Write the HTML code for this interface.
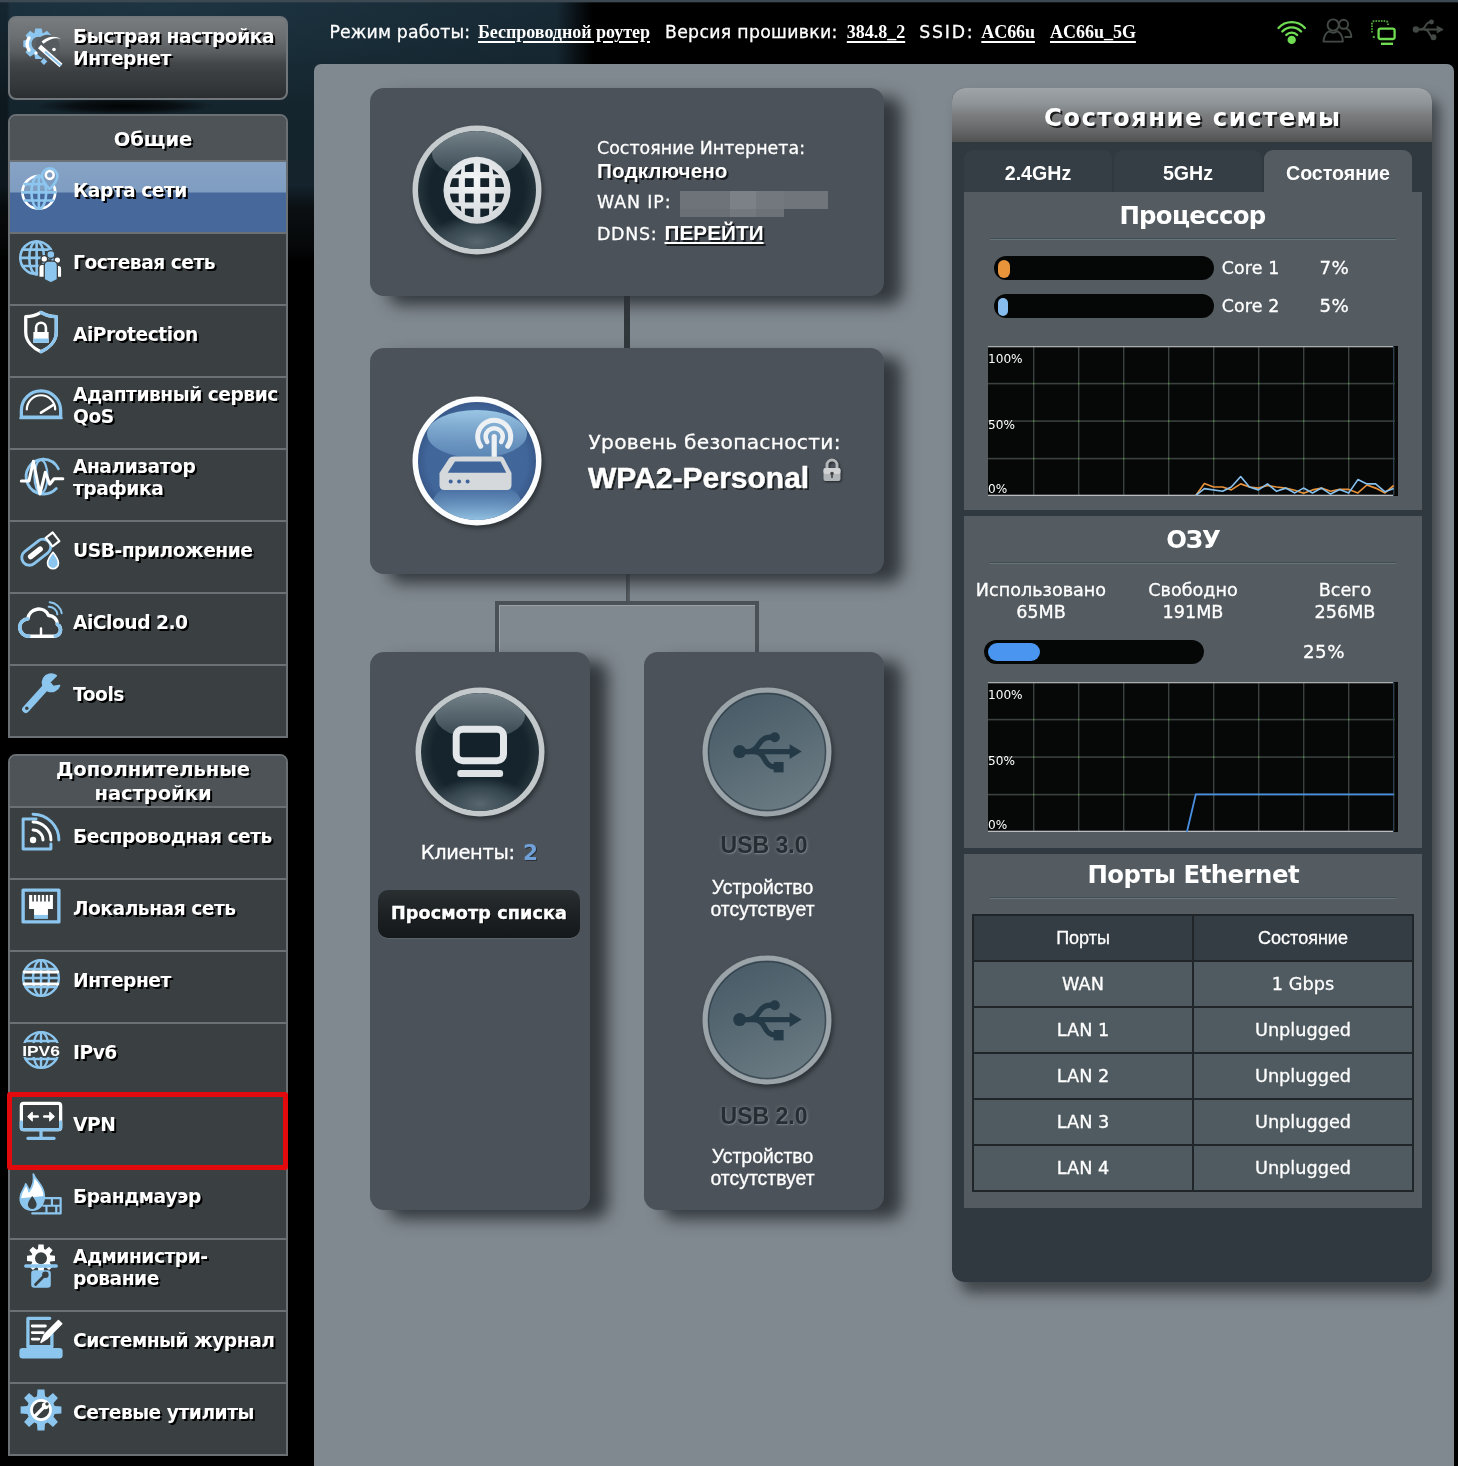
<!DOCTYPE html>
<html lang="ru">
<head>
<meta charset="utf-8">
<title>ASUS Wireless Router RT-AC66U - Карта сети</title>
<style>
html,body{margin:0;padding:0;}
body{width:1458px;height:1466px;overflow:hidden;position:relative;background:#000;color:#fff;
 font-family:"DejaVu Sans","Liberation Sans",sans-serif;font-size:17.3px;}
#bg{position:absolute;left:0;top:0;width:1458px;height:1466px;
 background:
  linear-gradient(to bottom,#3d4952 0,#3d4952 1.5px,rgba(61,73,82,0) 3px),
  linear-gradient(to right,rgba(0,0,0,0) 0,rgba(0,0,0,0) 556px,#000 592px),
  radial-gradient(ellipse 90px 9px at 125px 106px,rgba(0,0,0,.9) 0%,rgba(0,0,0,.6) 55%,rgba(0,0,0,0) 100%),
  radial-gradient(ellipse 420px 110px at 160px 0px,rgba(40,70,88,.4) 0%,rgba(40,70,88,0) 100%),
  linear-gradient(to right,rgba(0,0,0,.35) 0,rgba(0,0,0,.35) 7px,rgba(0,0,0,0) 10px),
  linear-gradient(to bottom,#172934 0,#15262f 70px,#14232c 186px,#0b1013 207px,#060809 245px,#000 262px),#000;}
#wrap{position:absolute;left:0;top:0;width:1458px;height:1466px;will-change:transform;transform:translateZ(0);-webkit-text-stroke:0.3px currentColor;}
.b,b,.mtxt,.tab,#topbar a{-webkit-text-stroke:0;}
#viewbtn span{-webkit-text-stroke:0.4px #fff;}
.abs{position:absolute;white-space:nowrap;}
.b{font-weight:bold;}
.nm{font-family:"DejaVu Sans",sans-serif;}
.ar{font-family:"Liberation Sans",sans-serif;}
.t17{font-family:"DejaVu Sans",sans-serif;font-size:17.4px;line-height:24px;}
.sh{text-shadow:2px 2px 0 #15191c;}
/* top bar */
#topbar{position:absolute;left:329px;top:20px;height:24px;line-height:24px;white-space:nowrap;font-size:17.3px;}
#topbar a{font-family:"Liberation Serif",serif;font-weight:bold;font-size:18px;color:#fff;text-decoration:underline;}
/* menu */
#qis{position:absolute;left:8px;top:16px;width:276px;height:80px;border:2px solid #70767a;border-radius:8px;
 background:linear-gradient(to bottom,#787c7f 0%,#6a6e71 25%,#5a5e61 42%,#44484b 56%,#3b3f42 68%,#34383a 84%,#2a2e30 100%);}
#qis svg{position:absolute;left:12px;top:8px;width:44px;height:44px;overflow:visible;}
.mtxt{font-weight:bold;font-size:18.7px;line-height:22px;letter-spacing:-0.5px;color:#fff;text-shadow:2px 2px 0 #000;white-space:nowrap;}
#qis .mtxt{position:absolute;left:63px;top:8px;}
.msec{position:absolute;left:8px;width:276px;border:2px solid #6a7073;border-radius:8px 8px 0 0;background:#3a4042;overflow:hidden;}
.mhead{background:#4d5356;text-align:center;}
.mtxt.hd{font-size:19.6px;letter-spacing:-0.1px;padding-left:10px;}
.mitem{position:relative;height:70px;border-top:2px solid #6a7073;background:#3a4042;}
.mitem .mtxt{position:absolute;left:63px;top:18px;}
.mitem.two .mtxt{top:6px;}
.mitem svg{position:absolute;left:7px;top:2px;width:48px;height:48px;}
.mitem.sel{background:linear-gradient(to bottom,#86a3c5 0,#7f9dc1 30px,#47689b 31px,#47689b 100%);}
#redbox{position:absolute;left:7px;top:1092px;width:271px;height:68px;border:5px solid #e20a0d;border-radius:3px;}
/* main */
#main{position:absolute;left:314px;top:64px;width:1140px;height:1420px;background:#818990;border-radius:7px;}
.card{position:absolute;background:#4b5259;border-radius:14px;box-shadow:18px 9px 16px rgba(42,48,52,.9);}
.ln{position:absolute;background:#4a5157;box-shadow:1px 0 0 #6c747a;}
.lnbox{position:absolute;border:4px solid #4a5157;border-bottom:none;box-sizing:border-box;box-shadow:inset 1px 1px 0 #9aa2a7;}
#blur i{position:absolute;display:block;}
#viewbtn{border-radius:10px;background:linear-gradient(to bottom,#2a2f32 0%,#1d2124 50%,#14181a 100%);text-align:center;box-shadow:0 1px 0 #5c646a;}
#viewbtn span{font-family:"DejaVu Sans",sans-serif;font-weight:bold;font-size:17.6px;line-height:46px;letter-spacing:-0.3px;text-shadow:1px 1px 0 #000;}
/* status panel */
#sp{position:absolute;left:952px;top:88px;width:480px;height:1194px;border-radius:13px;background:#30393f;box-shadow:8px 11px 13px rgba(48,52,55,.78);overflow:hidden;}
#sphead{height:54px;background:linear-gradient(to bottom,#9ea4a8 0%,#8d9397 30%,#7b7d7e 50%,#686a6b 75%,#505252 100%);text-align:center;}
#sphead span{font-family:"DejaVu Sans",sans-serif;font-weight:bold;font-size:23px;letter-spacing:2px;line-height:58px;text-shadow:2px 2px 0 #222;}
.tab{position:absolute;top:150px;height:42px;line-height:46px;text-align:center;font-family:"Liberation Sans",sans-serif;font-weight:bold;font-size:19.6px;background:#343e44;border-radius:9px 9px 0 0;}
.tab.act{background:#545c62;}
.sbox{position:absolute;left:964px;width:458px;background:#545c62;}
.stitle{position:absolute;left:964px;width:457px;text-align:center;font-family:"DejaVu Sans",sans-serif;font-weight:bold;font-size:23.4px;line-height:32px;}
.sdiv{position:absolute;left:990px;width:406px;height:1px;background:#414c53;box-shadow:0 1px 0 #66747b;}
.bar{position:absolute;background:#050707;border-radius:12px;}
.bar i{position:absolute;display:block;border-radius:9px;}
#ptab{position:absolute;left:972px;top:914px;width:442px;height:278px;background:#1f2528;}
.pr{position:absolute;left:0;width:442px;height:46px;}
.pr div{position:absolute;top:2px;height:44px;line-height:44px;text-align:center;background:#4f5b61;font-family:"DejaVu Sans",sans-serif;font-size:17.7px;}
.pr.hd div{background:#343d44;font-family:"Liberation Sans",sans-serif;font-size:18px;height:44px;line-height:45px;}
.pr div:first-child{left:2px;width:218px;}
.pr div:last-child{left:222px;width:218px;}
.pr:nth-child(1){top:0px;}.pr:nth-child(2){top:46px;}.pr:nth-child(3){top:92px;}.pr:nth-child(4){top:138px;}.pr:nth-child(5){top:184px;}.pr:nth-child(6){top:230px;}
</style>
</head>
<body>
<div id="bg"></div>
<div id="wrap">
<div class="abs" style="left:329.5px;top:20px;font-family:'DejaVu Sans',sans-serif;font-weight:normal;font-size:17.3px;line-height:24px;letter-spacing:0.157px;">Режим работы:</div>
<div class="abs" style="left:478px;top:20px;font-family:'Liberation Serif',sans-serif;font-weight:bold;font-size:18px;line-height:24px;letter-spacing:-0.036px;-webkit-text-stroke:0;text-decoration:underline;text-decoration-thickness:1.9px;text-underline-offset:2.6px;">Беспроводной роутер</div>
<div class="abs" style="left:665px;top:20px;font-family:'DejaVu Sans',sans-serif;font-weight:normal;font-size:17.3px;line-height:24px;letter-spacing:0.317px;">Версия прошивки:</div>
<div class="abs" style="left:846.8px;top:20px;font-family:'Liberation Serif',sans-serif;font-weight:bold;font-size:18px;line-height:24px;letter-spacing:-0.017px;-webkit-text-stroke:0;text-decoration:underline;text-decoration-thickness:1.9px;text-underline-offset:2.6px;">384.8_2</div>
<div class="abs" style="left:919.2px;top:20px;font-family:'DejaVu Sans',sans-serif;font-weight:normal;font-size:17.3px;line-height:24px;letter-spacing:1.807px;">SSID:</div>
<div class="abs" style="left:981.3px;top:20px;font-family:'Liberation Serif',sans-serif;font-weight:bold;font-size:18px;line-height:24px;letter-spacing:-0.079px;-webkit-text-stroke:0;text-decoration:underline;text-decoration-thickness:1.9px;text-underline-offset:2.6px;">AC66u</div>
<div class="abs" style="left:1050px;top:20px;font-family:'Liberation Serif',sans-serif;font-weight:bold;font-size:18px;line-height:24px;letter-spacing:-0.017px;-webkit-text-stroke:0;text-decoration:underline;text-decoration-thickness:1.9px;text-underline-offset:2.6px;">AC66u_5G</div>
<svg class="abs" style="left:1270px;top:10px" width="184" height="44" viewBox="0 0 184 44" fill="none" stroke-linecap="round" stroke-linejoin="round">
<g stroke="#6fdc52" stroke-width="2.3"><path d="M8.5,18 A17.8,17.8 0 0 1 34.9,18"/><path d="M12.3,21.5 A12.6,12.6 0 0 1 31.1,21.5"/><path d="M16.2,25 A7.4,7.4 0 0 1 27.2,25"/></g><circle cx="21.7" cy="29.9" r="4.2" fill="#6fdc52"/>
<g stroke="#434945" stroke-width="1.9"><circle cx="73.6" cy="14.3" r="4.5"/><path d="M76.5,18.6c3.2,1.2 4.6,4 4.8,8.4h-6"/><circle cx="63.2" cy="15" r="5.6" fill="#000"/><path d="M53.6,31.6c0.2,-6 2.4,-9 5.8,-10.4c2.2,1.8 5.4,1.8 7.6,0c3.4,1.4 5.6,4.4 5.8,10.4z" fill="#000"/></g>
<g stroke="#4a9a38" stroke-width="2" stroke-dasharray="1.6 1.1" stroke-linecap="butt"><path d="M102,22.5v-9a2.4,2.4 0 0 1 2.4,-2.4h11.2a2.4,2.4 0 0 1 2.4,2.4v1.5"/></g><circle cx="103.8" cy="27" r="1.2" fill="#4a9a38"/>
<rect x="108.6" y="18.6" width="16" height="10.4" rx="2" stroke="#6fdc52" stroke-width="2.3"/><path d="M111,33.8h12" stroke="#6fdc52" stroke-width="2.4" stroke-linecap="butt"/>
<g stroke="#434945" fill="#434945" stroke-width="1.9"><circle cx="145.9" cy="19.5" r="2.2"/><path d="M146,19.5h22" fill="none"/><path d="M167.5,16.4l5.6,3.1l-5.6,3.1z" stroke-width="1"/><path d="M150,19.5q3.5,0 5.5,-3.7q2,-3.8 5.5,-3.8" fill="none"/><circle cx="161.5" cy="12" r="1.5"/><path d="M154.5,19.5q3,0 4.6,3.6q1.8,4 4.4,4.2" fill="none"/><circle cx="163.5" cy="27.3" r="2"/></g>
</svg>
<div id="qis"><svg viewBox="0 0 44 44" fill="none" stroke="#8cc6ee" stroke-width="2.4" stroke-linecap="round" stroke-linejoin="round" ><path d="M27.3,13.7 L31.7,14.6 L31.7,21.0 L27.3,21.9 L27.0,22.5 L29.5,26.2 L24.9,30.8 L21.2,28.3 L20.6,28.6 L19.7,33.0 L13.3,33.0 L12.4,28.6 L11.8,28.3 L8.1,30.8 L3.5,26.2 L6.0,22.5 L5.7,21.9 L1.3,21.0 L1.3,14.6 L5.7,13.7 L6.0,13.1 L3.5,9.4 L8.1,4.8 L11.8,7.3 L12.4,7.0 L13.3,2.6 L19.7,2.6 L20.6,7.0 L21.2,7.3 L24.9,4.8 L29.5,9.4 L27.0,13.1Z" fill="#8cc6ee" stroke="none"/><path d="M7,12 a11,11 0 0 0 0,12" stroke="#ffffff" stroke-width="3.4" fill="none"/><circle cx="16.5" cy="17.8" r="7" fill="#5d6266" stroke="none"/><circle cx="25.5" cy="21" r="12.2" fill="#565b5f" stroke="none"/><path d="M19.5,15.5 Q28,8 39,12.5 Q29,10.8 21.5,17.8z" fill="#ffffff" stroke="none"/><path d="M17.5,20.5 L39,39.5" stroke="#ffffff" stroke-width="4.6" stroke-linecap="butt"/><path d="M23,25.5 L39,39.5" stroke="#8cc6ee" stroke-width="2" stroke-linecap="butt"/><circle cx="32" cy="23.5" r="1.8" fill="#ffffff" stroke="none"/><path d="M18.5,35.5l3.4,-3.4l3.4,3.4l-3.4,3.4z" fill="#8cc6ee" stroke="none"/><path d="M12,27l2,-2l2,2l-2,2z" fill="#ffffff" stroke="none"/></svg><div class="mtxt">Быстрая настройка<br>Интернет</div></div>
<div class="msec" style="top:114px"><div class="mhead" style="height:44px"><div class="mtxt hd" style="padding-top:13px">Общие</div></div>
<div class="mitem sel"><svg viewBox="0 0 44 44" fill="none" stroke="#8cc6ee" stroke-width="2.4" stroke-linecap="round" stroke-linejoin="round" ><circle stroke="#fff" cx="20" cy="26" r="15"/><ellipse cx="20" cy="26" rx="6.8" ry="15"/><path d="M5,26H35M20,11V41M7.1,18.5H32.9M7.1,33.5H32.9"/><path d="M30,4a7,7 0 0 1 7,7c0,5 -7,12 -7,12s-7,-7 -7,-12a7,7 0 0 1 7,-7z" fill="#7f9dc1" stroke="#8cc6ee"/><circle cx="30" cy="10" r="3.6" stroke="#ffffff"/></svg><div class="mtxt">Карта сети</div></div>
<div class="mitem "><svg viewBox="0 0 44 44" fill="none" stroke="#8cc6ee" stroke-width="2.4" stroke-linecap="round" stroke-linejoin="round" ><circle cx="18" cy="20" r="15"/><ellipse cx="18" cy="20" rx="6.8" ry="15"/><path d="M3,20H33M18,5V35M5.1,12.5H30.9M5.1,27.5H30.9"/><g fill="#ffffff" stroke="#3a4042" stroke-width="1.2"><circle cx="25" cy="21" r="3"/><path d="M20,38v-9a3,3 0 0 1 3,-3h4a3,3 0 0 1 3,3v9z"/><circle cx="37" cy="22" r="3"/><path d="M33,38v-8a3,3 0 0 1 3,-3h2a3,3 0 0 1 3,3v8z"/><circle cx="31" cy="17" r="3.6" fill="#8cc6ee"/><path d="M25,40v-13a4,4 0 0 1 4,-4h4a4,4 0 0 1 4,4v13l-6,3z" fill="#8cc6ee"/></g></svg><div class="mtxt">Гостевая сеть</div></div>
<div class="mitem "><svg viewBox="0 0 44 44" fill="none" stroke="#8cc6ee" stroke-width="2.4" stroke-linecap="round" stroke-linejoin="round" ><path d="M22,4c5,3 10,4 14,4v14c0,9 -7,15 -14,18c-7,-3 -14,-9 -14,-18v-14c4,0 9,-1 14,-4z" stroke="#ffffff" stroke-width="3"/><path d="M22,4c5,3 10,4 14,4v14c0,9 -7,15 -14,18" stroke="#8cc6ee" stroke-width="3"/><rect x="15" y="22" width="14" height="10" fill="#ffffff" stroke="none"/><path d="M17.5,22v-4a4.5,4.5 0 0 1 9,0v4" stroke="#ffffff"/><rect x="15" y="28" width="14" height="4" fill="#8cc6ee" stroke="none"/></svg><div class="mtxt">AiProtection</div></div>
<div class="mitem two"><svg viewBox="0 0 44 44" fill="none" stroke="#8cc6ee" stroke-width="2.4" stroke-linecap="round" stroke-linejoin="round" ><path d="M4,34v-6a18,18 0 0 1 36,0v6z" stroke="#8cc6ee" stroke-width="3"/><path d="M9,27a13,13 0 0 1 26,0" stroke="#ffffff" stroke-width="2"/><path d="M22,30l11,-7" stroke="#ffffff" stroke-width="2.4"/><path d="M3,35h38" stroke="#8cc6ee" stroke-width="2"/></svg><div class="mtxt">Адаптивный сервис<br>QoS</div></div>
<div class="mitem two"><svg viewBox="0 0 44 44" fill="none" stroke="#8cc6ee" stroke-width="2.4" stroke-linecap="round" stroke-linejoin="round" ><g transform="translate(2 0.5)"><path d="M22,6a16,16 0 1 0 12,27" stroke="#8cc6ee" stroke-width="2.6"/><path d="M22,6a16,16 0 0 1 14,9" stroke="#8cc6ee"/><ellipse cx="20" cy="22" rx="6" ry="15" stroke="#8cc6ee" stroke-width="2"/><path d="M2,26h7l4,-18l6,30l5,-20l4,11l4,-5h8" stroke="#ffffff" stroke-width="2.8"/></g></svg><div class="mtxt">Анализатор<br>трафика</div></div>
<div class="mitem "><svg viewBox="0 0 44 44" fill="none" stroke="#8cc6ee" stroke-width="2.4" stroke-linecap="round" stroke-linejoin="round" ><g transform="rotate(-38 20 24)"><rect x="2" y="17" width="30" height="14" rx="7" stroke="#8cc6ee" stroke-width="2.6"/><rect x="8" y="21.5" width="16" height="5" rx="2.5" fill="#ffffff" stroke="none"/><rect x="32" y="19" width="8" height="10" stroke="#ffffff" stroke-width="2"/></g><path d="M33,26c4,5 5,8 5,10a5,5 0 0 1 -10,0c0,-2 1,-5 5,-10z" fill="#8cc6ee" stroke="#ffffff" stroke-width="1.5"/></svg><div class="mtxt">USB-приложение</div></div>
<div class="mitem "><svg viewBox="0 0 44 44" fill="none" stroke="#8cc6ee" stroke-width="2.4" stroke-linecap="round" stroke-linejoin="round" ><g transform="translate(0 2.8)"><path d="M11,34a8,8 0 0 1 -1,-16a10,10 0 0 1 19,-3a8,8 0 0 1 8,8a6,6 0 0 1 -2,11z" stroke="#ffffff" stroke-width="3.2"/><path d="M11,34a8,8 0 0 1 -1,-16" stroke="#8cc6ee" stroke-width="3.2"/><path d="M35,34a6,6 0 0 0 2,-11" stroke="#8cc6ee" stroke-width="3.2"/><path d="M29,7a8,8 0 0 1 8,7M30,3a12,12 0 0 1 11,10" stroke="#8cc6ee" stroke-width="1.8"/><path d="M15,34h14M22,27v6" stroke="#ffffff" stroke-width="2.2"/></g></svg><div class="mtxt">AiCloud 2.0</div></div>
<div class="mitem "><svg viewBox="0 0 44 44" fill="none" stroke="#8cc6ee" stroke-width="2.4" stroke-linecap="round" stroke-linejoin="round" ><path d="M8,38L26,18" stroke="#8cc6ee" stroke-width="6.5"/><path d="M36,7a8,8 0 1 0 3,9l-6,1l-3,-4z" fill="#8cc6ee" stroke="#8cc6ee" stroke-width="1.5"/><circle cx="9" cy="37" r="1.6" fill="#3a4042" stroke="none"/></svg><div class="mtxt">Tools</div></div>
</div>
<div class="msec" style="top:754px"><div class="mhead" style="height:50px"><div class="mtxt hd" style="padding-top:2px;line-height:24px">Дополнительные<br>настройки</div></div>
<div class="mitem "><svg viewBox="0 0 44 44" fill="none" stroke="#8cc6ee" stroke-width="2.4" stroke-linecap="round" stroke-linejoin="round" ><g transform="translate(22 22) scale(0.91) translate(-22 -22)"><path d="M17,7h-13v30h28v-5" stroke="#8cc6ee" stroke-width="3"/><circle cx="14" cy="28" r="3.2" fill="#ffffff" stroke="none"/><path d="M14,18a10,10 0 0 1 10,10" stroke="#ffffff" stroke-width="3"/><path d="M14,10a18,18 0 0 1 18,18" stroke="#ffffff" stroke-width="3"/><path d="M14,2a26,26 0 0 1 26,26" stroke="#8cc6ee" stroke-width="3"/></g></svg><div class="mtxt">Беспроводная сеть</div></div>
<div class="mitem "><svg viewBox="0 0 44 44" fill="none" stroke="#8cc6ee" stroke-width="2.4" stroke-linecap="round" stroke-linejoin="round" ><g transform="translate(22 22) scale(0.91) translate(-22 -22)"><rect x="4" y="6" width="36" height="32" stroke="#8cc6ee" stroke-width="3.4"/><path d="M10,11h24v14h-5v6h-14v-6h-5z" fill="#ffffff" stroke="none"/><path d="M14,11v6M18,11v6M22,11v6M26,11v6M30,11v6" stroke="#3a4042" stroke-width="1.6"/><rect x="15" y="31" width="14" height="4" fill="#8cc6ee" stroke="none"/></g></svg><div class="mtxt">Локальная сеть</div></div>
<div class="mitem "><svg viewBox="0 0 44 44" fill="none" stroke="#8cc6ee" stroke-width="2.4" stroke-linecap="round" stroke-linejoin="round" ><g transform="translate(22 22) scale(0.91) translate(-22 -22)"><circle cx="22" cy="22" r="18"/><ellipse cx="22" cy="22" rx="8.1" ry="18"/><path d="M4,22H40M22,4V40M6.5,13.0H37.5M6.5,31.0H37.5"/><path d="M5,16h34M5,28h34" stroke="#ffffff" stroke-width="3"/></g></svg><div class="mtxt">Интернет</div></div>
<div class="mitem "><svg viewBox="0 0 44 44" fill="none" stroke="#8cc6ee" stroke-width="2.4" stroke-linecap="round" stroke-linejoin="round" ><g transform="translate(22 22) scale(0.91) translate(-22 -22)"><circle cx="22" cy="22" r="18"/><ellipse cx="22" cy="22" rx="8.1" ry="18"/><path d="M4,22H40M22,4V40M6.5,13.0H37.5M6.5,31.0H37.5"/><rect x="2" y="15" width="40" height="14" fill="#3a4042" stroke="none"/><text x="22" y="28" text-anchor="middle" font-family="Liberation Sans, sans-serif" font-weight="bold" font-size="15" fill="#ffffff" stroke="none" textLength="38" lengthAdjust="spacingAndGlyphs">IPV6</text></g></svg><div class="mtxt">IPv6</div></div>
<div class="mitem "><svg viewBox="0 0 44 44" fill="none" stroke="#8cc6ee" stroke-width="2.4" stroke-linecap="round" stroke-linejoin="round" ><rect x="4" y="5" width="36" height="24" rx="2" stroke="#ffffff" stroke-width="3"/><path d="M4,22v5a2,2 0 0 0 2,2h32a2,2 0 0 0 2,-2v-5" stroke="#8cc6ee" stroke-width="3"/><path d="M11,17h8M25,17h8" stroke="#ffffff" stroke-width="2.4"/><path d="M14,13l-4,4l4,4z M30,13l4,4l-4,4z" fill="#ffffff" stroke="#ffffff" stroke-width="1"/><path d="M22,30v6M10,37h24" stroke="#8cc6ee" stroke-width="3"/></svg><div class="mtxt">VPN</div></div>
<div class="mitem "><svg viewBox="0 0 44 44" fill="none" stroke="#8cc6ee" stroke-width="2.4" stroke-linecap="round" stroke-linejoin="round" ><g transform="translate(0 1.8)"><path d="M15,2c2,6 10,10 10,20c0,8 -5,13 -11,13c-7,0 -11,-5 -11,-11c0,-6 4,-8 5,-13c2,3 3,5 3,7c3,-4 5,-9 4,-16z" fill="#ffffff" stroke="#8cc6ee" stroke-width="1.6"/><path d="M3,24c0,6 4,11 11,11c6,0 11,-5 11,-13z" fill="#8cc6ee" stroke="none"/><path d="M14,22c3,4 4,6 4,8a4,4 0 0 1 -8,0c0,-2 1,-4 4,-8z" fill="#3a4042" stroke="none"/><path d="M24,24h16v14h-26M24,31h16M32,24v7M27,31v7M36,31v7" stroke="#8cc6ee" stroke-width="2"/></g></svg><div class="mtxt">Брандмауэр</div></div>
<div class="mitem two"><svg viewBox="0 0 44 44" fill="none" stroke="#8cc6ee" stroke-width="2.4" stroke-linecap="round" stroke-linejoin="round" ><path d="M30.6,12.2 L34.8,12.6 L34.8,17.4 L30.6,17.8 L30.0,19.1 L32.7,22.4 L29.4,25.7 L26.1,23.0 L24.8,23.6 L24.4,27.8 L19.6,27.8 L19.2,23.6 L17.9,23.0 L14.6,25.7 L11.3,22.4 L14.0,19.1 L13.4,17.8 L9.2,17.4 L9.2,12.6 L13.4,12.2 L14.0,10.9 L11.3,7.6 L14.6,4.3 L17.9,7.0 L19.2,6.4 L19.6,2.2 L24.4,2.2 L24.8,6.4 L26.1,7.0 L29.4,4.3 L32.7,7.6 L30.0,10.9Z" fill="#ffffff" stroke="none"/><circle cx="22" cy="15" r="5.5" fill="#3a4042" stroke="none"/><path d="M8,22h28" stroke="#8cc6ee" stroke-width="3"/><rect x="13" y="26" width="18" height="16" rx="3" fill="#8cc6ee" stroke="none"/><path d="M17,39l8,-8" stroke="#3a4042" stroke-width="2.6"/><circle cx="26" cy="30" r="3" fill="#3a4042" stroke="none"/></svg><div class="mtxt">Администри-<br>рование</div></div>
<div class="mitem "><svg viewBox="0 0 44 44" fill="none" stroke="#8cc6ee" stroke-width="2.4" stroke-linecap="round" stroke-linejoin="round" ><path d="M10,4h20M10,4v26h22v-12" stroke="#8cc6ee" stroke-width="3"/><path d="M14,11h12M14,17h10M14,23h6" stroke="#ffffff" stroke-width="2.6"/><path d="M22,26l3,-7l13,-13l3,3l-13,13z" fill="#ffffff" stroke="#ffffff" stroke-width="1.4"/><rect x="3" y="32" width="38" height="8" rx="2" fill="#8cc6ee" stroke="#8cc6ee" stroke-width="1.6"/></svg><div class="mtxt">Системный журнал</div></div>
<div class="mitem "><svg viewBox="0 0 44 44" fill="none" stroke="#8cc6ee" stroke-width="2.4" stroke-linecap="round" stroke-linejoin="round" ><path d="M34.5,18.3 L40.7,18.8 L40.7,25.2 L34.5,25.7 L33.4,28.2 L37.5,33.0 L33.0,37.5 L28.2,33.4 L25.7,34.5 L25.2,40.7 L18.8,40.7 L18.3,34.5 L15.8,33.4 L11.0,37.5 L6.5,33.0 L10.6,28.2 L9.5,25.7 L3.3,25.2 L3.3,18.8 L9.5,18.3 L10.6,15.8 L6.5,11.0 L11.0,6.5 L15.8,10.6 L18.3,9.5 L18.8,3.3 L25.2,3.3 L25.7,9.5 L28.2,10.6 L33.0,6.5 L37.5,11.0 L33.4,15.8Z" fill="#8cc6ee" stroke="none"/><circle cx="22" cy="22" r="10" fill="#ffffff" stroke="none"/><circle cx="22" cy="22" r="7.5" fill="#3a4042" stroke="none"/><path d="M16,28l8,-8" stroke="#ffffff" stroke-width="3"/><circle cx="26" cy="18" r="3.2" fill="#ffffff" stroke="none"/><circle cx="27.5" cy="16.5" r="1.6" fill="#3a4042" stroke="none"/></svg><div class="mtxt">Сетевые утилиты</div></div>
</div>
<div id="redbox"></div>
<div id="main"></div>
<svg width="0" height="0" style="position:absolute"><defs>
<radialGradient id="gdark" cx="50%" cy="50%" r="50%"><stop offset="0" stop-color="#15242c"/><stop offset="0.8" stop-color="#16252d"/><stop offset="1" stop-color="#26343c"/></radialGradient>
<radialGradient id="gblue" cx="50%" cy="50%" r="50%"><stop offset="0" stop-color="#44699d"/><stop offset="0.85" stop-color="#41669a"/><stop offset="1" stop-color="#39598a"/></radialGradient>
<linearGradient id="gusb" x1="0.2" y1="0" x2="0.7" y2="1"><stop offset="0" stop-color="#485b66"/><stop offset="0.5" stop-color="#586a74"/><stop offset="1" stop-color="#6b7b83"/></linearGradient>
<radialGradient id="gwhite" cx="45%" cy="35%" r="75%"><stop offset="0" stop-color="#f4f6f7"/><stop offset="1" stop-color="#cfd3d6"/></radialGradient>
<linearGradient id="gloss" x1="0" y1="0" x2="0" y2="1"><stop offset="0" stop-color="#7d8a91" stop-opacity=".9"/><stop offset="0.55" stop-color="#5c6b74" stop-opacity=".85"/><stop offset="1" stop-color="#44545d" stop-opacity=".7"/></linearGradient>
<radialGradient id="gloss2" cx="50%" cy="60%" r="55%"><stop offset="0" stop-color="#5b6a73" stop-opacity=".95"/><stop offset="0.6" stop-color="#4d5d66" stop-opacity=".6"/><stop offset="1" stop-color="#4d5d66" stop-opacity="0"/></radialGradient>
<linearGradient id="glossb" x1="0" y1="0" x2="0" y2="1"><stop offset="0" stop-color="#9fcbe8" stop-opacity=".95"/><stop offset="1" stop-color="#6f9cc8" stop-opacity=".55"/></linearGradient>
<linearGradient id="glossb2" x1="0" y1="0" x2="0" y2="1"><stop offset="0" stop-color="#6f9cc8" stop-opacity="0"/><stop offset="1" stop-color="#9fd0ee" stop-opacity=".95"/></linearGradient>
</defs></svg>
<div class="abs" style="left:624px;top:296px;width:6px;height:52px;background:#31383c"></div>
<div class="abs" style="left:625.5px;top:574px;width:4.5px;height:28px;background:linear-gradient(to right,#4a5156,#5a6267)"></div>
<div class="lnbox" style="left:495px;top:601px;width:264px;height:60px"></div>
<div class="card" style="left:370px;top:88px;width:514px;height:208px"></div>
<div class="card" style="left:370px;top:348px;width:514px;height:226px"></div>
<div class="card" style="left:370px;top:652px;width:220px;height:558px"></div>
<div class="card" style="left:644px;top:652px;width:240px;height:558px"></div>
<svg class="abs" style="left:412px;top:125px;filter:drop-shadow(2px 3px 2px rgba(20,25,30,.55))" width="130" height="130" viewBox="0 0 130 130">
<circle cx="65" cy="65" r="64.5" fill="#c6cbce"/><circle cx="65" cy="65" r="59" fill="url(#gdark)"/><clipPath id="cp477190"><circle cx="65" cy="65" r="59"/></clipPath><g clip-path="url(#cp477190)"><ellipse cx="65" cy="29" rx="45" ry="23" fill="url(#gloss)"/><ellipse cx="65" cy="112" rx="46" ry="24" fill="url(#gloss2)"/></g><circle cx="65.0" cy="65.3" r="33.5" fill="url(#gwhite)"/><clipPath id="gcp"><circle cx="65.0" cy="65.3" r="27.3"/></clipPath><g fill="#14232b" clip-path="url(#gcp)"><rect x="52.9" y="38.1" width="8.8" height="8.9"/><rect x="68.3" y="38.1" width="8.8" height="8.9"/><rect x="37.8" y="53.2" width="8.9" height="8.8"/><rect x="52.9" y="53.2" width="8.8" height="8.8"/><rect x="68.3" y="53.2" width="8.8" height="8.8"/><rect x="83.3" y="53.2" width="8.9" height="8.8"/><rect x="37.8" y="68.6" width="8.9" height="8.8"/><rect x="52.9" y="68.6" width="8.8" height="8.8"/><rect x="68.3" y="68.6" width="8.8" height="8.8"/><rect x="83.3" y="68.6" width="8.9" height="8.8"/><rect x="52.9" y="83.6" width="8.8" height="8.9"/><rect x="68.3" y="83.6" width="8.8" height="8.9"/><polygon points="42.5,49.5 49.4,44.1 48.8,49.3"/><polygon points="42.5,81.1 49.4,86.5 48.8,81.3"/><polygon points="87.5,49.5 80.6,44.1 81.2,49.3"/><polygon points="87.5,81.1 80.6,86.5 81.2,81.3"/></g></svg>
<svg class="abs" style="left:412px;top:396px;filter:drop-shadow(2px 3px 2px rgba(20,25,30,.55))" width="130" height="130" viewBox="0 0 130 130">
<circle cx="65" cy="65" r="64.5" fill="#fbfcfd"/><circle cx="65" cy="65" r="59" fill="url(#gblue)"/><clipPath id="cp477461"><circle cx="65" cy="65" r="59"/></clipPath><g clip-path="url(#cp477461)"><ellipse cx="65" cy="38" rx="50" ry="24" fill="url(#glossb)"/><ellipse cx="65" cy="106" rx="44" ry="20" fill="url(#glossb2)"/></g><g fill="none" stroke="#eef1f3" stroke-linecap="round"><path d="M68.7,50.2 a16.5,16.5 0 1 1 27,0" stroke-width="5"/><path d="M75.2,45.8 a8.6,8.6 0 1 1 14,0" stroke-width="4.6"/><path d="M82.2,40.5 v24" stroke-width="5.2"/></g>
<path d="M42,60.5 h47 q2,0 3,2 l7.5,14.5 v12 q0,5 -5,5 h-62 q-5,0 -5,-5 v-12 l9.5,-14.5 q1.5,-2 5,-2z" fill="#d6d9dc"/>
<path d="M43,65.5 h45.5 l5.8,11.3 h-58.6z" fill="#3f659a"/>
<circle cx="38.7" cy="85.6" r="2" fill="#3f659a"/><circle cx="47.1" cy="85.6" r="2" fill="#3f659a"/><circle cx="55.6" cy="85.6" r="2" fill="#3f659a"/></svg>
<svg class="abs" style="left:415px;top:687px;filter:drop-shadow(2px 3px 2px rgba(20,25,30,.55))" width="130" height="130" viewBox="0 0 130 130">
<circle cx="65" cy="65" r="64.5" fill="#c3c8cb"/><circle cx="65" cy="65" r="59" fill="url(#gdark)"/><clipPath id="cp480752"><circle cx="65" cy="65" r="59"/></clipPath><g clip-path="url(#cp480752)"><ellipse cx="65" cy="29" rx="45" ry="23" fill="url(#gloss)"/><ellipse cx="65" cy="112" rx="46" ry="24" fill="url(#gloss2)"/></g><rect x="41.2" y="42.3" width="47.3" height="31.4" rx="6.5" fill="#14232b" stroke="#e4e7e9" stroke-width="7"/><rect x="42.3" y="83.1" width="45.8" height="6.8" rx="3" fill="#dfe2e4"/></svg>
<svg class="abs" style="left:702px;top:687px;filter:drop-shadow(2px 3px 2px rgba(20,25,30,.55))" width="130" height="130" viewBox="0 0 130 130">
<circle cx="65" cy="65" r="64.5" fill="#9ba4a9"/><circle cx="65" cy="65" r="59" fill="url(#gusb)"/><clipPath id="cp767752"><circle cx="65" cy="65" r="59"/></clipPath><g clip-path="url(#cp767752)"></g><circle cx="65" cy="65" r="58.6" fill="none" stroke="rgba(28,42,52,.55)" stroke-width="1.6"/><g fill="#243a46" stroke="#243a46" stroke-linecap="round"><circle cx="37.7" cy="64.6" r="6.5" stroke="none"/><path d="M37.7,64.6 H88" stroke-width="5.4" fill="none" stroke-linecap="butt"/><path d="M87.6,57.2 L99.7,64.6 L87.6,72z" stroke="none"/><path d="M46,64.6 Q53,64 57,57 Q61,50.3 68,50.3 H72" fill="none" stroke-width="5.4"/><circle cx="72.8" cy="50.3" r="5" stroke="none"/><path d="M53,64.6 Q59,65 62.5,72 Q66,79.8 73,80" fill="none" stroke-width="5.4"/><rect x="71.7" y="75" width="9.9" height="10.4" stroke="none"/></g></svg>
<svg class="abs" style="left:702px;top:955px;filter:drop-shadow(2px 3px 2px rgba(20,25,30,.55))" width="130" height="130" viewBox="0 0 130 130">
<circle cx="65" cy="65" r="64.5" fill="#9ba4a9"/><circle cx="65" cy="65" r="59" fill="url(#gusb)"/><clipPath id="cp7671020"><circle cx="65" cy="65" r="59"/></clipPath><g clip-path="url(#cp7671020)"></g><circle cx="65" cy="65" r="58.6" fill="none" stroke="rgba(28,42,52,.55)" stroke-width="1.6"/><g fill="#243a46" stroke="#243a46" stroke-linecap="round"><circle cx="37.7" cy="64.6" r="6.5" stroke="none"/><path d="M37.7,64.6 H88" stroke-width="5.4" fill="none" stroke-linecap="butt"/><path d="M87.6,57.2 L99.7,64.6 L87.6,72z" stroke="none"/><path d="M46,64.6 Q53,64 57,57 Q61,50.3 68,50.3 H72" fill="none" stroke-width="5.4"/><circle cx="72.8" cy="50.3" r="5" stroke="none"/><path d="M53,64.6 Q59,65 62.5,72 Q66,79.8 73,80" fill="none" stroke-width="5.4"/><rect x="71.7" y="75" width="9.9" height="10.4" stroke="none"/></g></svg>
<div class="abs" style="left:597px;top:136px;font-family:'DejaVu Sans',sans-serif;font-weight:normal;font-size:17.4px;line-height:24px;letter-spacing:0.029px;">Состояние Интернета:</div>
<div class="abs" style="left:597px;top:158px;font-family:'Liberation Sans',sans-serif;font-weight:bold;font-size:20.7px;line-height:26px;letter-spacing:0.095px;-webkit-text-stroke:0;text-shadow:2px 2px 0 #15191c;">Подключено</div>
<div class="abs" style="left:597px;top:190px;font-family:'DejaVu Sans',sans-serif;font-weight:normal;font-size:17.4px;line-height:24px;letter-spacing:0.891px;">WAN IP:</div>
<div class="abs" id="blur" style="left:680px;top:191px;width:148px;height:26px"><i style="left:0;top:0;width:50px;height:18px;background:#6d7378"></i><i style="left:50px;top:0;width:26px;height:18px;background:#7b8186"></i><i style="left:76px;top:0;width:28px;height:18px;background:#72787d"></i><i style="left:104px;top:0;width:44px;height:18px;background:#6f757a"></i><i style="left:0;top:18px;width:50px;height:8px;background:#696f74"></i><i style="left:50px;top:18px;width:26px;height:8px;background:#72787d"></i><i style="left:76px;top:18px;width:28px;height:8px;background:#6c7277"></i></div>
<div class="abs" style="left:597px;top:222px;font-family:'DejaVu Sans',sans-serif;font-weight:normal;font-size:17.4px;line-height:24px;letter-spacing:0.699px;">DDNS:</div>
<div class="abs" style="left:664.5px;top:221px;font-family:'Liberation Sans',sans-serif;font-weight:bold;font-size:20.7px;line-height:24px;letter-spacing:0.06px;-webkit-text-stroke:0;text-shadow:2px 2px 0 #15191c;text-decoration:underline;">ПЕРЕЙТИ</div>
<div class="abs" style="left:588.5px;top:428px;font-family:'DejaVu Sans',sans-serif;font-weight:normal;font-size:20.2px;line-height:28px;letter-spacing:0.287px;">Уровень безопасности:</div>
<div class="abs ar b" style="left:588px;top:458px;font-size:30px;line-height:40px;-webkit-text-stroke:0.45px #fff;text-shadow:2px 2px 0 #1d2124">WPA2-Personal</div>
<svg class="abs" style="left:822px;top:458px;filter:drop-shadow(1px 1px 1px rgba(20,24,27,.8))" width="20" height="24" viewBox="0 0 20 24"><path d="M5,11v-4a5,5 0 0 1 10,0v4" fill="none" stroke="#b4b7b9" stroke-width="3"/><rect x="1.5" y="10" width="17" height="13" rx="2" fill="#b2b5b7"/><rect x="1.5" y="10" width="17" height="6" rx="2" fill="#cfd1d2"/><circle cx="10" cy="15.5" r="1.8" fill="#444"/><rect x="9.2" y="15.5" width="1.6" height="4.5" fill="#444"/></svg>
<div class="abs" style="left:420.7px;top:839px;font-family:'DejaVu Sans',sans-serif;font-weight:normal;font-size:19.4px;line-height:28px;letter-spacing:-0.317px;">Клиенты:</div>
<div class="abs nm b" style="left:523px;top:839px;font-size:21.6px;line-height:28px;color:#6fa0d8;text-shadow:1px 1px 0 #2a3036">2</div>
<div class="abs" id="viewbtn" style="left:378px;top:890px;width:202px;height:48px"><span style="letter-spacing:0.102px">Просмотр списка</span></div>
<div class="abs ar b" style="left:644px;width:240px;top:828px;text-align:center;font-size:23px;line-height:34px;color:#262e34;text-shadow:0 0 4px rgba(120,130,138,.9),1px 1px 1px rgba(130,140,148,.7)">USB 3.0</div>
<div class="abs ar" style="left:644px;width:237px;top:876px;text-align:center;font-size:19.4px;line-height:22px">Устройство<br>отсутствует</div>
<div class="abs ar b" style="left:644px;width:240px;top:1098.5px;text-align:center;font-size:23px;line-height:34px;color:#262e34;text-shadow:0 0 4px rgba(120,130,138,.9),1px 1px 1px rgba(130,140,148,.7)">USB 2.0</div>
<div class="abs ar" style="left:644px;width:237px;top:1145.0px;text-align:center;font-size:19.4px;line-height:22px">Устройство<br>отсутствует</div>
<div id="sp"><div id="sphead"></div></div>
<div class="abs" style="left:1044px;top:103px;font-family:'DejaVu Sans',sans-serif;font-weight:bold;font-size:24.4px;line-height:30px;letter-spacing:1.417px;-webkit-text-stroke:0;text-shadow:2px 2px 0 #1c1c1c;">Состояние системы</div>
<div class="tab" style="left:964px;width:148px">2.4GHz</div><div class="tab" style="left:1114px;width:148px">5GHz</div><div class="tab act" style="left:1264px;width:148px">Состояние</div>
<div class="sbox" style="top:192px;height:318px"></div>
<div class="sbox" style="top:516px;height:332px"></div>
<div class="sbox" style="top:854px;height:354px"></div>
<div class="abs" style="left:1119.4px;top:199.5px;font-family:'DejaVu Sans',sans-serif;font-weight:bold;font-size:24.4px;line-height:32px;letter-spacing:-0.699px;-webkit-text-stroke:0;">Процессор</div>
<div class="sdiv" style="top:238px"></div>
<div class="abs" style="left:1166.3px;top:523.5px;font-family:'DejaVu Sans',sans-serif;font-weight:bold;font-size:24.4px;line-height:32px;letter-spacing:-1.188px;-webkit-text-stroke:0;">ОЗУ</div>
<div class="sdiv" style="top:562px"></div>
<div class="abs" style="left:1087.4px;top:858.5px;font-family:'DejaVu Sans',sans-serif;font-weight:bold;font-size:24.4px;line-height:32px;letter-spacing:-0.534px;-webkit-text-stroke:0;">Порты Ethernet</div>
<div class="sdiv" style="top:897px"></div>
<div class="bar" style="left:994px;top:256px;width:220px;height:24px"><i style="left:3.8px;top:3.8px;width:12.4px;height:18px;background:#e8943a"></i></div>
<div class="bar" style="left:994px;top:294px;width:220px;height:24px"><i style="left:3.8px;top:3.8px;width:10.4px;height:18px;background:#86bdee"></i></div>
<div class="abs" style="left:1221.7px;top:256px;font-family:'DejaVu Sans',sans-serif;font-weight:normal;font-size:17.4px;line-height:24px;letter-spacing:0.151px;">Core 1</div>
<div class="abs" style="left:1319.4px;top:256px;font-family:'DejaVu Sans',sans-serif;font-weight:normal;font-size:18.2px;line-height:24px;letter-spacing:0.541px;">7%</div>
<div class="abs" style="left:1221.7px;top:294px;font-family:'DejaVu Sans',sans-serif;font-weight:normal;font-size:17.4px;line-height:24px;letter-spacing:0.151px;">Core 2</div>
<div class="abs" style="left:1319.4px;top:294px;font-family:'DejaVu Sans',sans-serif;font-weight:normal;font-size:18.2px;line-height:24px;letter-spacing:0.541px;">5%</div>
<svg class="abs" style="left:988px;top:346px" width="410" height="150" viewBox="0 0 410 150"><rect x="0" y="0" width="410" height="150" fill="#060808"/><rect x="45.0" y="1" width="1.4" height="148" fill="#3a413e"/><rect x="90.0" y="1" width="1.4" height="148" fill="#3a413e"/><rect x="135.0" y="1" width="1.4" height="148" fill="#3a413e"/><rect x="180.0" y="1" width="1.4" height="148" fill="#3a413e"/><rect x="225.0" y="1" width="1.4" height="148" fill="#3a413e"/><rect x="270.0" y="1" width="1.4" height="148" fill="#3a413e"/><rect x="315.0" y="1" width="1.4" height="148" fill="#3a413e"/><rect x="360.0" y="1" width="1.4" height="148" fill="#3a413e"/><rect x="405.0" y="1" width="1.4" height="148" fill="#3a413e"/><rect x="0" y="36.8" width="406" height="1.6" fill="#3a413e"/><rect x="0" y="74.3" width="406" height="1.6" fill="#3a413e"/><rect x="0" y="111.8" width="406" height="1.6" fill="#3a413e"/><rect x="45.0" y="36.8" width="1.4" height="1.6" fill="#4a8a3a"/><rect x="45.0" y="74.3" width="1.4" height="1.6" fill="#4a8a3a"/><rect x="45.0" y="111.8" width="1.4" height="1.6" fill="#4a8a3a"/><rect x="90.0" y="36.8" width="1.4" height="1.6" fill="#4a8a3a"/><rect x="90.0" y="74.3" width="1.4" height="1.6" fill="#4a8a3a"/><rect x="90.0" y="111.8" width="1.4" height="1.6" fill="#4a8a3a"/><rect x="135.0" y="36.8" width="1.4" height="1.6" fill="#4a8a3a"/><rect x="135.0" y="74.3" width="1.4" height="1.6" fill="#4a8a3a"/><rect x="135.0" y="111.8" width="1.4" height="1.6" fill="#4a8a3a"/><rect x="180.0" y="36.8" width="1.4" height="1.6" fill="#4a8a3a"/><rect x="180.0" y="74.3" width="1.4" height="1.6" fill="#4a8a3a"/><rect x="180.0" y="111.8" width="1.4" height="1.6" fill="#4a8a3a"/><rect x="225.0" y="36.8" width="1.4" height="1.6" fill="#4a8a3a"/><rect x="225.0" y="74.3" width="1.4" height="1.6" fill="#4a8a3a"/><rect x="225.0" y="111.8" width="1.4" height="1.6" fill="#4a8a3a"/><rect x="270.0" y="36.8" width="1.4" height="1.6" fill="#4a8a3a"/><rect x="270.0" y="74.3" width="1.4" height="1.6" fill="#4a8a3a"/><rect x="270.0" y="111.8" width="1.4" height="1.6" fill="#4a8a3a"/><rect x="315.0" y="36.8" width="1.4" height="1.6" fill="#4a8a3a"/><rect x="315.0" y="74.3" width="1.4" height="1.6" fill="#4a8a3a"/><rect x="315.0" y="111.8" width="1.4" height="1.6" fill="#4a8a3a"/><rect x="360.0" y="36.8" width="1.4" height="1.6" fill="#4a8a3a"/><rect x="360.0" y="74.3" width="1.4" height="1.6" fill="#4a8a3a"/><rect x="360.0" y="111.8" width="1.4" height="1.6" fill="#4a8a3a"/><rect x="405.0" y="36.8" width="1.4" height="1.6" fill="#4a8a3a"/><rect x="405.0" y="74.3" width="1.4" height="1.6" fill="#4a8a3a"/><rect x="405.0" y="111.8" width="1.4" height="1.6" fill="#4a8a3a"/><rect x="0" y="0" width="406" height="1.3" fill="#a9adaf"/><rect x="0" y="148.7" width="406" height="1.3" fill="#b9bdbf"/><rect x="405" y="0" width="1" height="150" fill="#2a3f52"/><polyline points="207.8,149.4 216.4,137.6 225.6,141.0 234.6,141.0 243.3,143.9 252.7,137.9 261.4,141 270.4,142.1 279.5,139.5 288.5,141 297.7,142.1 306.8,144.2 315.5,147.3 324.5,143.9 333.5,142.1 342.6,145.3 351.6,143.4 360.8,143.4 369.9,146.9 378.9,139 387.6,142.1 397,146.9 405.7,139.5" fill="none" stroke="#e8923a" stroke-width="1.65" stroke-linejoin="round"/><polyline points="207.8,149.4 216.4,142.6 234.6,145.3 243.3,141.0 252.7,130.5 261.4,141.0 270.4,143.9 279.5,137.9 288.5,145.3 297.7,142.1 306.8,146.9 315.5,142.1 324.5,146.9 333.5,142.1 342.6,148.1 351.6,143.4 360.8,146.9 369.9,133.6 378.9,137.9 387.6,137.9 397,145.8 405.7,142.6" fill="none" stroke="#86c0ee" stroke-width="1.65" stroke-linejoin="round"/><g font-family="DejaVu Sans, sans-serif" font-size="12.1" fill="#fff"><text x="0" y="17">100%</text><text x="0" y="83">50%</text><text x="0" y="147">0%</text></g></svg>
<div class="abs nm" style="left:965px;width:152px;top:579px;text-align:center;font-size:17.6px;line-height:22px">Использовано<br>65MB</div>
<div class="abs nm" style="left:1117px;width:152px;top:579px;text-align:center;font-size:17.6px;line-height:22px">Свободно<br>191MB</div>
<div class="abs nm" style="left:1269px;width:152px;top:579px;text-align:center;font-size:17.6px;line-height:22px">Всего<br>256MB</div>
<div class="bar" style="left:984px;top:640px;width:220px;height:24px"><i style="left:4px;top:3px;width:52px;height:18px;background:#4a95f0"></i></div>
<div class="abs" style="left:1303px;top:640px;font-family:'DejaVu Sans',sans-serif;font-weight:normal;font-size:18.2px;line-height:24px;letter-spacing:0.531px;">25%</div>
<svg class="abs" style="left:988px;top:682px" width="410" height="150" viewBox="0 0 410 150"><rect x="0" y="0" width="410" height="150" fill="#060808"/><rect x="45.0" y="1" width="1.4" height="148" fill="#3a413e"/><rect x="90.0" y="1" width="1.4" height="148" fill="#3a413e"/><rect x="135.0" y="1" width="1.4" height="148" fill="#3a413e"/><rect x="180.0" y="1" width="1.4" height="148" fill="#3a413e"/><rect x="225.0" y="1" width="1.4" height="148" fill="#3a413e"/><rect x="270.0" y="1" width="1.4" height="148" fill="#3a413e"/><rect x="315.0" y="1" width="1.4" height="148" fill="#3a413e"/><rect x="360.0" y="1" width="1.4" height="148" fill="#3a413e"/><rect x="405.0" y="1" width="1.4" height="148" fill="#3a413e"/><rect x="0" y="36.8" width="406" height="1.6" fill="#3a413e"/><rect x="0" y="74.3" width="406" height="1.6" fill="#3a413e"/><rect x="0" y="111.8" width="406" height="1.6" fill="#3a413e"/><rect x="45.0" y="36.8" width="1.4" height="1.6" fill="#4a8a3a"/><rect x="45.0" y="74.3" width="1.4" height="1.6" fill="#4a8a3a"/><rect x="45.0" y="111.8" width="1.4" height="1.6" fill="#4a8a3a"/><rect x="90.0" y="36.8" width="1.4" height="1.6" fill="#4a8a3a"/><rect x="90.0" y="74.3" width="1.4" height="1.6" fill="#4a8a3a"/><rect x="90.0" y="111.8" width="1.4" height="1.6" fill="#4a8a3a"/><rect x="135.0" y="36.8" width="1.4" height="1.6" fill="#4a8a3a"/><rect x="135.0" y="74.3" width="1.4" height="1.6" fill="#4a8a3a"/><rect x="135.0" y="111.8" width="1.4" height="1.6" fill="#4a8a3a"/><rect x="180.0" y="36.8" width="1.4" height="1.6" fill="#4a8a3a"/><rect x="180.0" y="74.3" width="1.4" height="1.6" fill="#4a8a3a"/><rect x="180.0" y="111.8" width="1.4" height="1.6" fill="#4a8a3a"/><rect x="225.0" y="36.8" width="1.4" height="1.6" fill="#4a8a3a"/><rect x="225.0" y="74.3" width="1.4" height="1.6" fill="#4a8a3a"/><rect x="225.0" y="111.8" width="1.4" height="1.6" fill="#4a8a3a"/><rect x="270.0" y="36.8" width="1.4" height="1.6" fill="#4a8a3a"/><rect x="270.0" y="74.3" width="1.4" height="1.6" fill="#4a8a3a"/><rect x="270.0" y="111.8" width="1.4" height="1.6" fill="#4a8a3a"/><rect x="315.0" y="36.8" width="1.4" height="1.6" fill="#4a8a3a"/><rect x="315.0" y="74.3" width="1.4" height="1.6" fill="#4a8a3a"/><rect x="315.0" y="111.8" width="1.4" height="1.6" fill="#4a8a3a"/><rect x="360.0" y="36.8" width="1.4" height="1.6" fill="#4a8a3a"/><rect x="360.0" y="74.3" width="1.4" height="1.6" fill="#4a8a3a"/><rect x="360.0" y="111.8" width="1.4" height="1.6" fill="#4a8a3a"/><rect x="405.0" y="36.8" width="1.4" height="1.6" fill="#4a8a3a"/><rect x="405.0" y="74.3" width="1.4" height="1.6" fill="#4a8a3a"/><rect x="405.0" y="111.8" width="1.4" height="1.6" fill="#4a8a3a"/><rect x="0" y="0" width="406" height="1.3" fill="#a9adaf"/><rect x="0" y="148.7" width="406" height="1.3" fill="#b9bdbf"/><rect x="405" y="0" width="1" height="150" fill="#2a3f52"/><polyline points="198.9,150 207.8,112.3 405.7,112.3" fill="none" stroke="#4a90e2" stroke-width="1.8"/><g font-family="DejaVu Sans, sans-serif" font-size="12.1" fill="#fff"><text x="0" y="17">100%</text><text x="0" y="83">50%</text><text x="0" y="147">0%</text></g></svg>
<div id="ptab">
<div class="pr hd"><div>Порты</div><div>Состояние</div></div>
<div class="pr "><div>WAN</div><div>1 Gbps</div></div>
<div class="pr "><div>LAN 1</div><div>Unplugged</div></div>
<div class="pr "><div>LAN 2</div><div>Unplugged</div></div>
<div class="pr "><div>LAN 3</div><div>Unplugged</div></div>
<div class="pr "><div>LAN 4</div><div>Unplugged</div></div>
</div>
</div>
</body>
</html>
